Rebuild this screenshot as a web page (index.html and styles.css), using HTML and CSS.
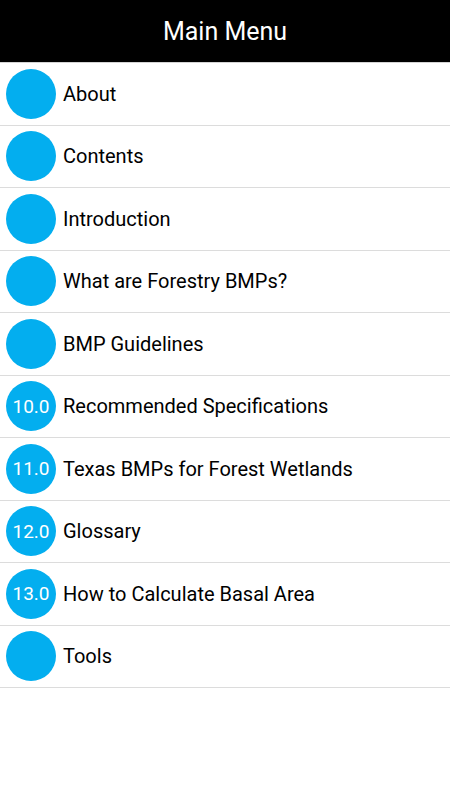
FILE: index.html
```html
<!DOCTYPE html>
<html lang="en">
<head>
    <meta charset="UTF-8">
    <meta name="viewport" content="width=device-width, initial-scale=1.0">
    <title>Main Menu</title>
    <link rel="stylesheet" href="styles.css">
</head>
<body>
    <header class="header">
        <h1 class="title">Main Menu</h1>
    </header>

    <ul class="menu">
        <li class="menu-item"><span class="badge"></span><span class="label">About</span></li>
        <li class="menu-item"><span class="badge"></span><span class="label">Contents</span></li>
        <li class="menu-item"><span class="badge"></span><span class="label">Introduction</span></li>
        <li class="menu-item"><span class="badge"></span><span class="label">What are Forestry BMPs?</span></li>
        <li class="menu-item"><span class="badge"></span><span class="label">BMP Guidelines</span></li>
        <li class="menu-item"><span class="badge">10.0</span><span class="label">Recommended Specifications</span></li>
        <li class="menu-item"><span class="badge">11.0</span><span class="label">Texas BMPs for Forest Wetlands</span></li>
        <li class="menu-item"><span class="badge">12.0</span><span class="label">Glossary</span></li>
        <li class="menu-item"><span class="badge">13.0</span><span class="label">How to Calculate Basal Area</span></li>
        <li class="menu-item"><span class="badge"></span><span class="label">Tools</span></li>
    </ul>
</body>
</html>
```

FILE: styles.css
```css
body {
    margin: 0;
    font-family: Roboto, 'Noto Sans', sans-serif;
    background-color: #ffffff;
}

.header {
    height: 62px;
    background-color: #000000;
    display: flex;
    align-items: center;
    justify-content: center;
    border-bottom: 1px solid #d4d4d4;
}

.title {
    margin: 0;
    color: #ffffff;
    font-size: 25px;
    font-weight: 400;
}

.menu {
    margin: 0;
    padding: 0;
    list-style: none;
}

.menu-item {
    height: 61.5px;
    display: flex;
    align-items: center;
    padding-left: 6px;
    border-bottom: 1px solid #dcdcdc;
}

.badge {
    width: 50px;
    height: 50px;
    border-radius: 50%;
    background-color: #03aeef;
    color: #ffffff;
    font-size: 19px;
    display: flex;
    align-items: center;
    justify-content: center;
    flex-shrink: 0;
}

.label {
    margin-left: 7px;
    font-size: 20px;
    color: #000000;
}
```
